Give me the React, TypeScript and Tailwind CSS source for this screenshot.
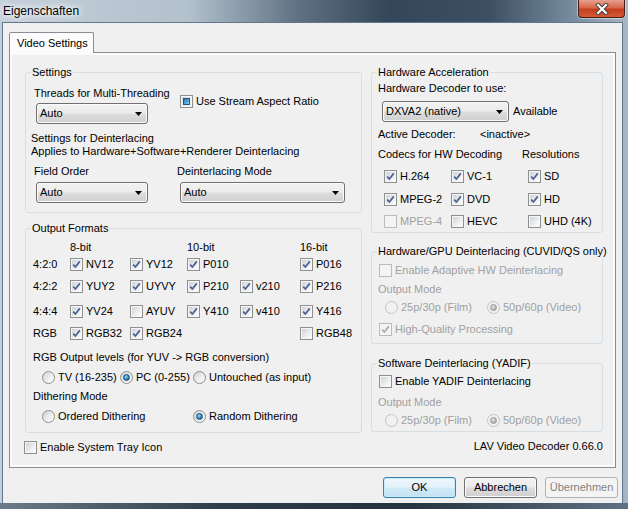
import React from "react";

type CB = { checked?: boolean; disabled?: boolean; mixed?: boolean };

function CheckBox({ checked = false, disabled = false, mixed = false }: CB) {
  return (
    <span
      className={`relative block w-[13px] h-[13px] shrink-0 border ${
        disabled ? "border-[#bcbcbc] bg-[#f4f4f4]" : "border-[#8e8f8f] bg-[#f6f6f6]"
      }`}
    >
      <span
        className={`absolute left-[1px] top-[1px] w-[9px] h-[9px] ${
          disabled
            ? "bg-[#f4f4f4]"
            : "bg-[linear-gradient(135deg,#cfd2d6,#eceef0_60%,#fbfbfb)]"
        }`}
      />
      {mixed && (
        <span className="absolute left-[2px] top-[2px] w-[7px] h-[7px] border border-[#1d5686] bg-[linear-gradient(135deg,#2c74b0,#5aa6d8_60%,#8fcbee)]" />
      )}
      {checked && (
        <svg className="absolute left-0 top-0" width="11" height="11" viewBox="0 0 11 11">
          <path
            d="M2.2 5.6 L4.4 8 L8.8 2.4"
            fill="none"
            stroke={disabled ? "#a9a9a9" : "#4c5f94"}
            strokeWidth="1.7"
          />
        </svg>
      )}
    </span>
  );
}

function Check({
  label,
  checked,
  disabled,
  mixed,
  className = "",
}: CB & { label: string; className?: string }) {
  return (
    <div className={`flex items-center h-[13px] ${className}`}>
      <CheckBox checked={checked} disabled={disabled} mixed={mixed} />
      <span className={`ml-[3px] whitespace-nowrap ${disabled ? "text-[#a0a0a0]" : ""}`}>{label}</span>
    </div>
  );
}

function Radio({
  label,
  checked = false,
  disabled = false,
  className = "",
}: {
  label: string;
  checked?: boolean;
  disabled?: boolean;
  className?: string;
}) {
  return (
    <div className={`flex items-center h-[13px] ${className}`}>
      <span
        className={`flex items-center justify-center w-[13px] h-[13px] shrink-0 rounded-full border ${
          disabled
            ? "border-[#c4c4c4] bg-[#f1f1f1]"
            : "border-[#8e8f8f] bg-[linear-gradient(135deg,#cfd2d6,#eef0f1_60%,#fdfdfd)]"
        }`}
      >
        {checked && (
          <span
            className={`block w-[7px] h-[7px] rounded-full border ${
              disabled
                ? "border-[#9a9a9a] bg-[radial-gradient(circle_at_40%_35%,#e8e8e8,#b4b4b4_60%,#8c8c8c)]"
                : "border-[#1b4f7c] bg-[radial-gradient(circle_at_40%_35%,#9ad6f7,#2d7dbb_60%,#164f80)]"
            }`}
          />
        )}
      </span>
      <span className={`ml-[3px] whitespace-nowrap ${disabled ? "text-[#a0a0a0]" : ""}`}>{label}</span>
    </div>
  );
}

function Combo({ text, className = "" }: { text: string; className?: string }) {
  return (
    <div
      className={`h-[21px] rounded-[3px] border border-[#707070] bg-[linear-gradient(#f2f2f2,#ebebeb_48%,#dddddd_52%,#cfcfcf)] shadow-[inset_0_0_0_1px_#fbfbfb] flex items-center justify-between pl-[3px] pr-[5px] ${className}`}
    >
      <span className="whitespace-nowrap">{text}</span>
      <svg width="7" height="4" viewBox="0 0 7 4">
        <path d="M0 0 H7 L3.5 4 Z" fill="#000" />
      </svg>
    </div>
  );
}

function Group({
  title,
  className = "",
  children,
}: {
  title: string;
  className?: string;
  children?: React.ReactNode;
}) {
  return (
    <div className={`relative border border-[#d5dfe5] rounded-[3px] ${className}`}>
      <div className="absolute -top-[7px] left-[5px] px-[1px] bg-[#f0f0f0] whitespace-nowrap">{title}</div>
      {children}
    </div>
  );
}

type Cell = [string, boolean] | null;

const formatRows: { label: string; mt: string; cells: Cell[] }[] = [
  { label: "4:2:0", mt: "mt-[4px]", cells: [["NV12", true], ["YV12", true], ["P010", true], null, ["P016", true]] },
  { label: "4:2:2", mt: "mt-[9px]", cells: [["YUY2", true], ["UYVY", true], ["P210", true], ["v210", true], ["P216", true]] },
  { label: "4:4:4", mt: "mt-[12px]", cells: [["YV24", true], ["AYUV", false], ["Y410", true], ["v410", true], ["Y416", true]] },
  { label: "RGB", mt: "mt-[9px]", cells: [["RGB32", true], ["RGB24", true], null, null, ["RGB48", false]] },
];

export default function App() {
  return (
    <div className="w-[628px] h-[509px] overflow-hidden flex flex-col bg-[linear-gradient(to_right,#c3cfda,#b3c1cd_30%,#5d6f80_48%,#34475a_62%,#3d5063_78%,#7c90a3_92%,#a6b7c6)] font-['Liberation_Sans',Arial,sans-serif] text-black">
      {/* Title bar */}
      <div className="h-[23px] shrink-0 flex justify-between">
        <div className="pl-[3px] pt-[4px] text-[12px] leading-[15px] [text-shadow:0_0_5px_#fff,0_0_9px_#fff,0_0_12px_#fff]">
          Eigenschaften
        </div>
        <div className="mr-[3px] w-[47px] h-[18px] rounded-b-[4px] border border-t-0 border-[#4a1a10] shadow-[0_0_0_1px_rgba(255,255,255,0.45)] bg-[linear-gradient(#e6a08f,#d8664b_45%,#c43f1f_55%,#d45a36)] flex items-center justify-center">
          <svg width="14" height="12" viewBox="0 0 14 12">
            <path d="M3 2 L11 10 M11 2 L3 10" stroke="#3b3b3b" strokeWidth="4" strokeLinecap="square" />
            <path d="M3 2 L11 10 M11 2 L3 10" stroke="#ffffff" strokeWidth="2.2" strokeLinecap="square" />
          </svg>
        </div>
      </div>

      {/* Client area */}
      <div className="ml-[3px] w-[619px] h-[480px] shrink-0 bg-[#f0f0f0] shadow-[0_0_0_1px_#62778b] flex flex-col text-[11px] leading-[13px]">
        <div className="pt-[9px] pl-[6px] flex flex-col">
          {/* Tab header */}
          <div className="relative z-10 -mb-px w-[85px] h-[21px] border border-b-0 border-[#898c95] rounded-t-[2px] bg-[#fcfcfc] flex items-center pl-[7px]">
            Video Settings
          </div>
          {/* Tab panel */}
          <div className="w-[607px] h-[416px] border border-[#898c95] bg-[#fcfcfc] p-[2px]">
            <div className="w-full h-full bg-[#f0f0f0] flex pl-[13px]">
              {/* Left column */}
              <div className="w-[337px] flex flex-col">
                <Group title="Settings" className="mt-[17px] h-[141px]">
                  <div className="mt-[14px] ml-[8px] flex">
                    <div className="w-[146px] flex flex-col">
                      <div>Threads for Multi-Threading</div>
                      <Combo text="Auto" className="mt-[3px] ml-[2px] w-[112px]" />
                    </div>
                    <Check label="Use Stream Aspect Ratio" mixed className="mt-[8px]" />
                  </div>
                  <div className="mt-[8px] ml-[5px]">Settings for Deinterlacing</div>
                  <div className="ml-[5px]">Applies to Hardware+Software+Renderer Deinterlacing</div>
                  <div className="mt-[7px] ml-[8px] flex">
                    <div className="w-[143px] flex flex-col">
                      <div>Field Order</div>
                      <Combo text="Auto" className="mt-[4px] ml-[2px] w-[112px]" />
                    </div>
                    <div className="flex flex-col">
                      <div>Deinterlacing Mode</div>
                      <Combo text="Auto" className="mt-[4px] ml-[3px] w-[165px]" />
                    </div>
                  </div>
                </Group>

                <Group title="Output Formats" className="mt-[15px] h-[205px]">
                  <div className="mt-[12px] ml-[8px] grid grid-cols-[36px_60px_57px_53px_60px_1fr]">
                    <div />
                    <div>8-bit</div>
                    <div />
                    <div>10-bit</div>
                    <div />
                    <div>16-bit</div>
                  </div>
                  {formatRows.map((r) => (
                    <div
                      key={r.label}
                      className={`${r.mt} ml-[7px] grid grid-cols-[37px_60px_57px_53px_60px_1fr] items-center`}
                    >
                      <div>{r.label}</div>
                      {r.cells.map((c, i) =>
                        c ? <Check key={i} label={c[0]} checked={c[1]} /> : <div key={i} />
                      )}
                    </div>
                  ))}
                  <div className="mt-[11px] ml-[7px]">RGB Output levels (for YUV -&gt; RGB conversion)</div>
                  <div className="mt-[7px] ml-[16px] flex">
                    <Radio label="TV (16-235)" className="w-[78px]" />
                    <Radio label="PC (0-255)" checked className="w-[73px]" />
                    <Radio label="Untouched (as input)" />
                  </div>
                  <div className="mt-[6px] ml-[7px]">Dithering Mode</div>
                  <div className="mt-[7px] ml-[16px] flex">
                    <Radio label="Ordered Dithering" className="w-[151px]" />
                    <Radio label="Random Dithering" checked />
                  </div>
                </Group>

                <Check label="Enable System Tray Icon" className="mt-[8px] -ml-px" />
              </div>

              {/* Right column */}
              <div className="ml-[9px] w-[232px] flex flex-col">
                <Group title="Hardware Acceleration" className="mt-[17px] h-[161px]">
                  <div className="mt-[9px] ml-[6px]">Hardware Decoder to use:</div>
                  <div className="mt-[6px] ml-[10px] flex items-center">
                    <Combo text="DXVA2 (native)" className="w-[127px]" />
                    <span className="ml-[4px]">Available</span>
                  </div>
                  <div className="mt-[6px] ml-[6px] flex">
                    <div className="w-[102px]">Active Decoder:</div>
                    <div>&lt;inactive&gt;</div>
                  </div>
                  <div className="mt-[7px] ml-[6px] flex">
                    <div className="w-[144px]">Codecs for HW Decoding</div>
                    <div>Resolutions</div>
                  </div>
                  <div className="mt-[9px] ml-[12px] grid grid-cols-[67px_77px_1fr]">
                    <Check label="H.264" checked />
                    <Check label="VC-1" checked />
                    <Check label="SD" checked />
                  </div>
                  <div className="mt-[10px] ml-[12px] grid grid-cols-[67px_77px_1fr]">
                    <Check label="MPEG-2" checked />
                    <Check label="DVD" checked />
                    <Check label="HD" checked />
                  </div>
                  <div className="mt-[9px] ml-[12px] grid grid-cols-[67px_77px_1fr]">
                    <Check label="MPEG-4" disabled />
                    <Check label="HEVC" />
                    <Check label="UHD (4K)" />
                  </div>
                </Group>

                <Group title="Hardware/GPU Deinterlacing (CUVID/QS only)" className="mt-[18px] h-[93px]">
                  <Check label="Enable Adaptive HW Deinterlacing" disabled className="mt-[12px] ml-[7px]" />
                  <div className="mt-[6px] ml-[6px] text-[#a0a0a0]">Output Mode</div>
                  <div className="mt-[5px] ml-[13px] flex">
                    <Radio label="25p/30p (Film)" disabled className="w-[102px]" />
                    <Radio label="50p/60p (Video)" checked disabled />
                  </div>
                  <Check label="High-Quality Processing" checked disabled className="mt-[9px] ml-[7px]" />
                </Group>

                <Group title="Software Deinterlacing (YADIF)" className="mt-[19px] h-[69px]">
                  <Check label="Enable YADIF Deinterlacing" className="mt-[11px] ml-[7px]" />
                  <div className="mt-[8px] ml-[6px] text-[#a0a0a0]">Output Mode</div>
                  <div className="mt-[5px] ml-[13px] flex">
                    <Radio label="25p/30p (Film)" disabled className="w-[102px]" />
                    <Radio label="50p/60p (Video)" checked disabled />
                  </div>
                </Group>

                <div className="mt-[8px] text-right">LAV Video Decoder 0.66.0</div>
              </div>
            </div>
          </div>
        </div>

        {/* Buttons */}
        <div className="mt-[9px] pr-[4px] flex justify-end gap-[8px]">
          <div className="w-[73px] h-[21px] rounded-[3px] border border-[#3c7fb1] bg-[linear-gradient(#eef7fc,#e2f1fa_48%,#d2e9f6_52%,#c3e1f2)] shadow-[inset_0_0_0_1px_#c6ebfb] flex items-center justify-center">
            OK
          </div>
          <div className="w-[73px] h-[21px] rounded-[3px] border border-[#707070] bg-[linear-gradient(#f2f2f2,#ebebeb_48%,#dddddd_52%,#cfcfcf)] shadow-[inset_0_0_0_1px_#fbfbfb] flex items-center justify-center">
            Abbrechen
          </div>
          <div className="w-[73px] h-[21px] rounded-[3px] border border-[#adb2b5] bg-[#f4f4f4] text-[#838383] flex items-center justify-center">
            Übernehmen
          </div>
        </div>
      </div>

      {/* Bottom frame */}
      <div className="flex-1 bg-[linear-gradient(to_right,#6c7b89,#2f3c49_35%,#26323e_65%,#5f7284)]" />
    </div>
  );
}
